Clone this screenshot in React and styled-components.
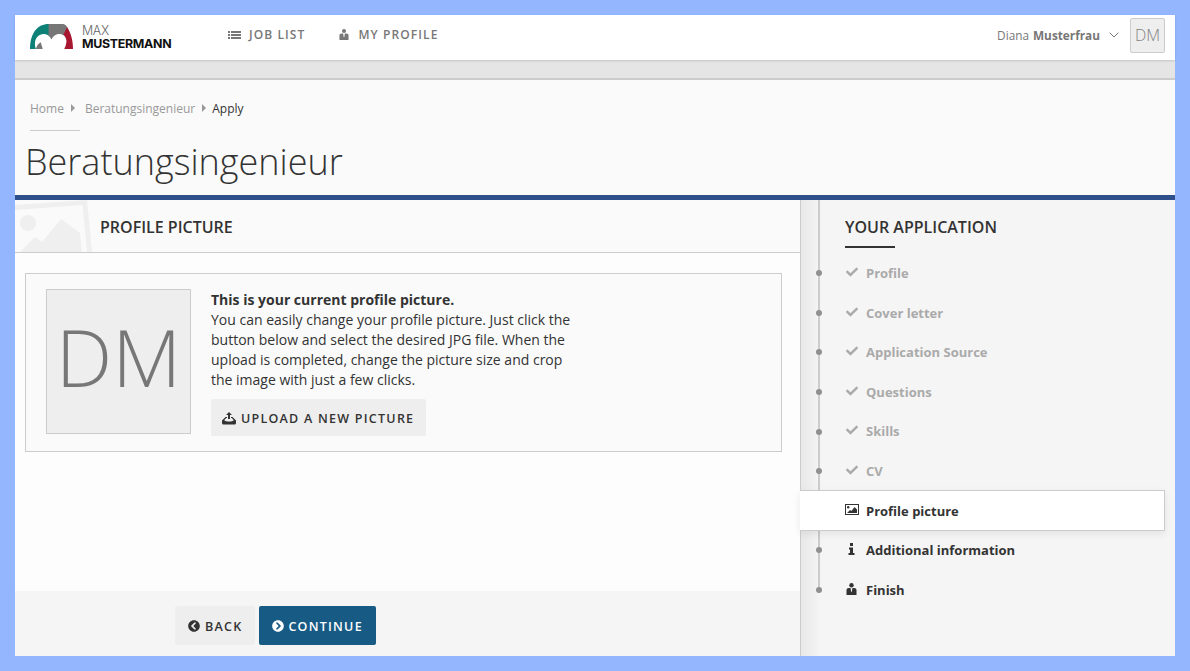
import styled, { createGlobalStyle } from 'styled-components';
import { FaCheck, FaChevronCircleLeft, FaChevronCircleRight } from 'react-icons/fa';
import { ChevronDown } from 'lucide-react';

const GlobalStyle = createGlobalStyle`
  html, body { margin: 0; padding: 0; }
  body { font-family: "Open Sans", "Liberation Sans", sans-serif; color: #333; }
  * { box-sizing: border-box; }
`;

const Page = styled.div`
  width: 1190px;
  height: 671px;
  padding: 15px;
  background: #94b6ff;
  overflow: hidden;
`;

const Frame = styled.div`
  display: flex;
  flex-direction: column;
  height: 641px;
  background: #fafafa;
`;

const TopBar = styled.header`
  height: 45px;
  flex: none;
  background: #fff;
  display: flex;
  align-items: center;
  padding: 0 10px 5px 15px;
  box-shadow: 0 1px 2px rgba(0, 0, 0, 0.15);
  z-index: 1;
`;

const Logo = styled.div`
  display: flex;
  align-items: center;
  gap: 9px;
  width: 198px;
  margin-top: 3px;
`;

const LogoText = styled.div`
  display: flex;
  flex-direction: column;
  font-family: Inter, "Liberation Sans", sans-serif;
  font-size: 12.4px;
  line-height: 13px;
  letter-spacing: -0.3px;
`;

const LogoMax = styled.span`
  font-weight: 300;
  color: #666;
`;

const LogoName = styled.span`
  font-weight: 700;
  color: #111;
`;

const Nav = styled.nav`
  display: flex;
  gap: 34px;
  flex: 1;
  margin-top: -1px;
`;

const NavLink = styled.a`
  display: flex;
  align-items: center;
  gap: ${(props) => props.$gap}px;
  font-size: 12px;
  font-weight: 600;
  letter-spacing: 1.1px;
  text-transform: uppercase;
  color: #777;
`;

const UserName = styled.div`
  display: flex;
  align-items: center;
  font-size: 11.8px;
  color: #777;
  gap: 4px;
`;

const Chevron = styled(ChevronDown)`
  margin: 0 8px 0 2px;
`;

const SmallAvatar = styled.div`
  width: 35px;
  height: 35px;
  background: #eee;
  border: 1px solid #ccc;
  border-radius: 2px;
  display: flex;
  align-items: center;
  justify-content: center;
  font-size: 16px;
  font-weight: 300;
  color: #808080;
`;

const GreyBand = styled.div`
  height: 20px;
  flex: none;
  background: #e5e5e5;
  border-bottom: 2px solid #ccc;
`;

const TitleArea = styled.div`
  height: 120px;
  flex: none;
  padding: 18px 10px 0;
  border-bottom: 5px solid #2f4f8a;
`;

const Crumbs = styled.div`
  display: flex;
  align-items: center;
  height: 20px;
  padding-left: 5px;
  font-size: 12px;
  color: #999;
`;

const CrumbArrow = styled.span`
  width: 0;
  height: 0;
  margin: 0 10px 0 7px;
  border-left: 4px solid #999;
  border-top: 4px solid transparent;
  border-bottom: 4px solid transparent;
`;

const CrumbCurrent = styled.span`
  margin-left: -4px;
  color: #333;
`;

const TitleRule = styled.div`
  width: 50px;
  height: 1px;
  margin: 12px 0 0 5px;
  background: #ccc;
`;

const Title = styled.h1`
  margin: 10px 0 0;
  font-size: 36px;
  line-height: 42px;
  font-weight: 300;
  color: #333;
`;

const Columns = styled.div`
  flex: 1;
  display: flex;
  min-height: 0;
`;

const Main = styled.main`
  width: 785px;
  display: flex;
  flex-direction: column;
  background: #fdfdfd;
`;

const SectionHead = styled.div`
  position: relative;
  height: 53px;
  flex: none;
  display: flex;
  align-items: center;
  padding: 1px 0 0 85px;
  background: #fafafa;
  border-bottom: 1px solid #ccc;
  overflow: hidden;
`;

const Watermark = styled.svg`
  position: absolute;
  left: 0;
  top: 0;
`;

const SectionTitle = styled.h2`
  margin: 0;
  font-size: 16px;
  font-weight: 600;
  text-transform: uppercase;
  color: #333;
`;

const Body = styled.div`
  flex: 1;
  padding: 20px 18px 0 10px;
`;

const Card = styled.div`
  display: flex;
  gap: 20px;
  height: 179px;
  padding: 15px 20px;
  background: #fafafa;
  border: 1px solid #ccc;
`;

const BigAvatar = styled.div`
  width: 145px;
  height: 145px;
  flex: none;
  display: flex;
  align-items: center;
  justify-content: center;
  padding-bottom: 12px;
  background: #eee;
  border: 1px solid #ccc;
  font-size: 80px;
  font-weight: 300;
  color: #777;
`;

const CardText = styled.div`
  width: 365px;
  padding-top: 1px;
  font-size: 14px;
  line-height: 20px;
  color: #333;
`;

const Strong = styled.strong`
  display: block;
  font-weight: 700;
`;

const Button = styled.button`
  display: inline-flex;
  align-items: center;
  gap: ${(props) => (props.$primary ? 4 : 5)}px;
  height: ${(props) => props.$height || 39}px;
  padding: 1px 13px 0;
  border: 0;
  border-radius: 2px;
  background: ${(props) => (props.$primary ? '#175a84' : '#eee')};
  color: ${(props) => (props.$primary ? '#fff' : '#333')};
  font-family: inherit;
  font-size: 12.5px;
  font-weight: 600;
  letter-spacing: 1.25px;
  text-transform: uppercase;
`;

const UploadButton = styled(Button)`
  margin-top: 9px;
  padding-left: 11px;
  padding-right: 12px;
`;

const Actions = styled.div`
  height: 65px;
  flex: none;
  display: flex;
  gap: 4px;
  padding: 15px 0 0 160px;
  background: #f5f5f5;
`;

const Aside = styled.aside`
  position: relative;
  flex: 1;
  padding-top: 16px;
  background: linear-gradient(to right, #e8e8e8, #f5f5f5 20px);
  border-left: 1px solid #ccc;

  &::before {
    content: '';
    position: absolute;
    left: 17px;
    top: 0;
    width: 2px;
    height: 390px;
    background: #ccc;
  }
`;

const AsideTitle = styled.h3`
  margin: 0 0 0 44px;
  font-size: 16px;
  line-height: 22px;
  font-weight: 600;
  text-transform: uppercase;
  color: #333;

  &::after {
    content: '';
    display: block;
    width: 50px;
    height: 2px;
    margin-top: 8px;
    background: #333;
  }
`;

const Steps = styled.ul`
  list-style: none;
  margin: 5.3px 0 0;
  padding: 0;
`;

const Step = styled.li`
  position: relative;
  display: flex;
  align-items: center;
  height: 39.6px;
  padding-left: 44px;
  font-size: 13px;
  font-weight: 700;
  color: ${(props) => (props.$done ? '#aaa' : '#333')};

  ${(props) =>
    props.$active
      ? `
    z-index: 1;
    margin: -0.7px 10px -0.7px -1px;
    padding-left: 45px;
    background: #fff;
    border: 1px solid #ccc;
    border-left: 0;
    height: 41px;
    box-shadow: 0 3px 8px rgba(0, 0, 0, 0.08);
  `
      : `
    &::before {
      content: '';
      position: absolute;
      left: 15px;
      top: 17px;
      width: 6px;
      height: 6px;
      border-radius: 50%;
      background: #909090;
    }
  `}
`;

const StepIcon = styled.span`
  width: 21px;
  flex: none;
  display: flex;
  padding-left: ${(props) => props.$inset || 0}px;
  margin-top: -2px;
  font-size: 12px;
  color: ${(props) => (props.$done ? '#aaa' : '#333')};
`;

const ListIcon = () => (
  <svg width="13" height="8" viewBox="0 0 13 8" fill="#777">
    <rect x="0" y="0" width="2" height="2" />
    <rect x="3" y="0" width="10" height="2" />
    <rect x="0" y="3" width="2" height="2" />
    <rect x="3" y="3" width="10" height="2" />
    <rect x="0" y="6" width="2" height="2" />
    <rect x="3" y="6" width="10" height="2" />
  </svg>
);

const PersonIcon = ({ color, size }) => (
  <svg width={size} height={size + 1} viewBox="0 0 11 12" fill={color}>
    <circle cx="5.5" cy="2.2" r="2.2" />
    <path d="M0.5 12 V7 C0.5 5.8 1.5 5 3 5 H4.6 L5 8 L5.5 9.5 L6 8 L6.4 5 H8 C9.5 5 10.5 5.8 10.5 7 V12 Z" />
  </svg>
);

const InfoIcon = () => (
  <svg width="7" height="12" viewBox="0 0 7 12" fill="#333">
    <rect x="2" y="0" width="3" height="3" />
    <path d="M1 4.5 H5 V10 H6.5 V12 H0.5 V10 H2 V6.5 H1 Z" />
  </svg>
);

const ImageIcon = () => (
  <svg width="14" height="11" viewBox="0 0 14 11">
    <rect x="0.5" y="0.5" width="13" height="10" fill="#fff" stroke="#333" />
    <circle cx="3.2" cy="3.2" r="1.2" fill="#333" />
    <path d="M2 9 L5 6 L6.5 7 L9.5 3 L12 5.5 V9 Z" fill="#333" />
  </svg>
);

const UploadIcon = () => (
  <svg width="14" height="13" viewBox="0 0 14 13" fill="#333">
    <path d="M7 0 L10 3 H8 V7 H6 V3 H4 Z" />
    <path d="M3.5 5 H5 V6 H4.2 L2.2 8.2 C3.5 10 10.5 10 11.8 8.2 L9.8 6 H9 V5 H10.5 L14 8.5 V10.5 C14 12 13.5 12.5 12.5 12.5 H1.5 C0.5 12.5 0 12 0 10.5 V8.5 Z" />
  </svg>
);

const LogoMark = () => (
  <svg width="43" height="25" viewBox="0 0 44 26" preserveAspectRatio="none">
    <path d="M0 26 C0 9 8 0 19 0 H24 V26 Z" fill="#0d8175" />
    <path d="M19 0 H34 C36 0.5 37 1.5 38 3 L36 26 H19 Z" fill="#777" />
    <path d="M38 3 C41 8 44 15 44 26 H35 C38 20 38 14 34 11.5 Z" fill="#a8162f" />
    <path d="M6 26 C4 20 5 14 10 11.5 C14 9.5 19 10 22 16 C25 9.5 31 9.5 34 11.5 C38 14 38 20 35 26 Z" fill="#fff" />
    <path d="M6 26 C7 22 9 20 11 19 L13 26 Z" fill="#777" />
  </svg>
);

const steps = [
  { label: 'Profile', done: true, inset: 1 },
  { label: 'Cover letter', done: true, inset: 1 },
  { label: 'Application Source', done: true, inset: 1 },
  { label: 'Questions', done: true, inset: 1 },
  { label: 'Skills', done: true, inset: 1 },
  { label: 'CV', done: true, inset: 1 },
  { label: 'Profile picture', active: true, icon: <ImageIcon /> },
  { label: 'Additional information', icon: <InfoIcon />, inset: 3 },
  { label: 'Finish', icon: <PersonIcon color="#333" size={11} />, inset: 1 },
];

const App = () => (
  <Page>
    <GlobalStyle />
    <Frame>
      <TopBar>
        <Logo>
          <LogoMark />
          <LogoText>
            <LogoMax>MAX</LogoMax>
            <LogoName>MUSTERMANN</LogoName>
          </LogoText>
        </Logo>
        <Nav>
          <NavLink $gap={8}>
            <ListIcon />
            Job list
          </NavLink>
          <NavLink $gap={9}>
            <PersonIcon color="#777" size={10} />
            My profile
          </NavLink>
        </Nav>
        <UserName>
          Diana <b>Musterfrau</b>
          <Chevron size={16} strokeWidth={1.5} />
        </UserName>
        <SmallAvatar>DM</SmallAvatar>
      </TopBar>
      <GreyBand />
      <TitleArea>
        <Crumbs>
          Home
          <CrumbArrow />
          Beratungsingenieur
          <CrumbArrow />
          <CrumbCurrent>Apply</CrumbCurrent>
        </Crumbs>
        <TitleRule />
        <Title>Beratungsingenieur</Title>
      </TitleArea>
      <Columns>
        <Main>
          <SectionHead>
            <Watermark width="78" height="52" viewBox="0 0 78 52" fill="#efefef">
              <path d="M0 5 L72 0 L77 52 H72 L67.5 5 L0 10 Z" />
              <circle cx="13" cy="23" r="8" />
              <path d="M5 52 L20 37 L27 42 L46 19 L65 33 L67 52 Z" />
            </Watermark>
            <SectionTitle>Profile picture</SectionTitle>
          </SectionHead>
          <Body>
            <Card>
              <BigAvatar>DM</BigAvatar>
              <CardText>
                <Strong>This is your current profile picture.</Strong>
                You can easily change your profile picture. Just click the button below and select the
                desired JPG file. When the upload is completed, change the picture size and crop the
                image with just a few clicks.
                <UploadButton $height={37}>
                  <UploadIcon />
                  Upload a new picture
                </UploadButton>
              </CardText>
            </Card>
          </Body>
          <Actions>
            <Button>
              <FaChevronCircleLeft size={12} />
              Back
            </Button>
            <Button $primary>
              <FaChevronCircleRight size={12} />
              Continue
            </Button>
          </Actions>
        </Main>
        <Aside>
          <AsideTitle>Your application</AsideTitle>
          <Steps>
            {steps.map((step) => (
              <Step key={step.label} $done={step.done} $active={step.active}>
                <StepIcon $done={step.done} $inset={step.inset}>
                  {step.done ? <FaCheck /> : step.icon}
                </StepIcon>
                {step.label}
              </Step>
            ))}
          </Steps>
        </Aside>
      </Columns>
    </Frame>
  </Page>
);

export default App;
